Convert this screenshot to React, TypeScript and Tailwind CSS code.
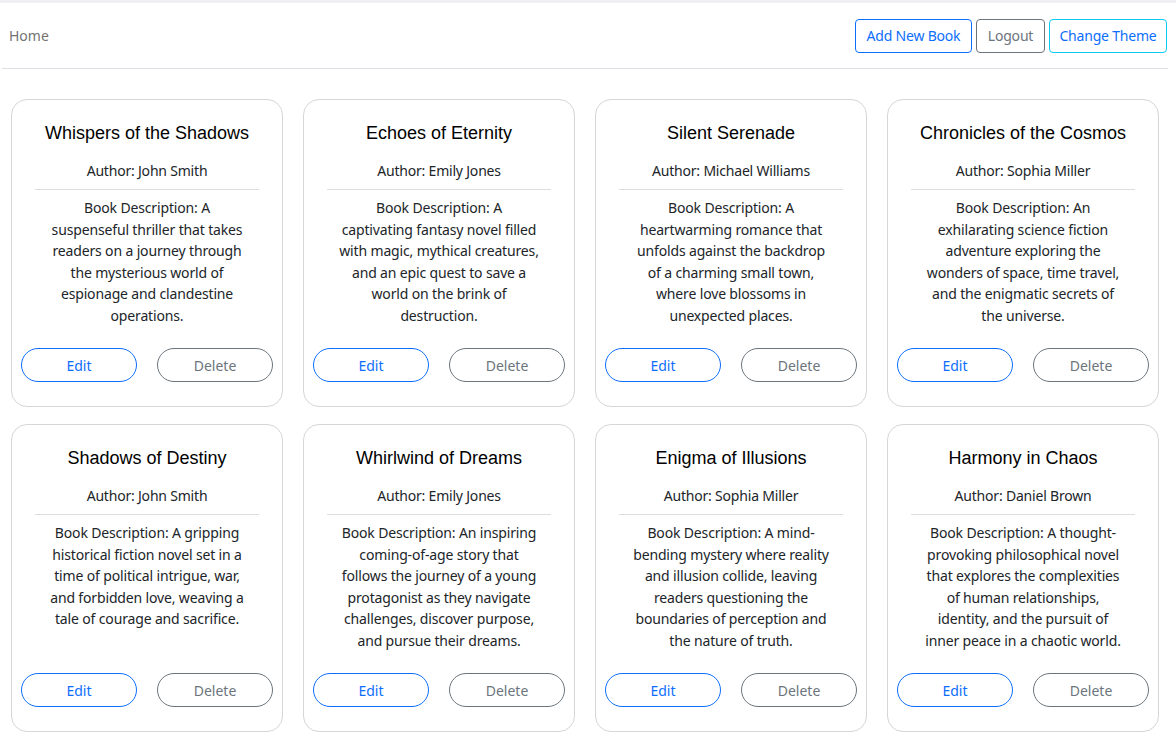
import React from "react";

type Book = { title: string; author: string; lines: string[] };

const books: Book[] = [
  {
    title: "Whispers of the Shadows",
    author: "John Smith",
    lines: [
      "Book Description: A",
      "suspenseful thriller that takes",
      "readers on a journey through",
      "the mysterious world of",
      "espionage and clandestine",
      "operations.",
    ],
  },
  {
    title: "Echoes of Eternity",
    author: "Emily Jones",
    lines: [
      "Book Description: A",
      "captivating fantasy novel filled",
      "with magic, mythical creatures,",
      "and an epic quest to save a",
      "world on the brink of",
      "destruction.",
    ],
  },
  {
    title: "Silent Serenade",
    author: "Michael Williams",
    lines: [
      "Book Description: A",
      "heartwarming romance that",
      "unfolds against the backdrop",
      "of a charming small town,",
      "where love blossoms in",
      "unexpected places.",
    ],
  },
  {
    title: "Chronicles of the Cosmos",
    author: "Sophia Miller",
    lines: [
      "Book Description: An",
      "exhilarating science fiction",
      "adventure exploring the",
      "wonders of space, time travel,",
      "and the enigmatic secrets of",
      "the universe.",
    ],
  },
  {
    title: "Shadows of Destiny",
    author: "John Smith",
    lines: [
      "Book Description: A gripping",
      "historical fiction novel set in a",
      "time of political intrigue, war,",
      "and forbidden love, weaving a",
      "tale of courage and sacrifice.",
    ],
  },
  {
    title: "Whirlwind of Dreams",
    author: "Emily Jones",
    lines: [
      "Book Description: An inspiring",
      "coming-of-age story that",
      "follows the journey of a young",
      "protagonist as they navigate",
      "challenges, discover purpose,",
      "and pursue their dreams.",
    ],
  },
  {
    title: "Enigma of Illusions",
    author: "Sophia Miller",
    lines: [
      "Book Description: A mind-",
      "bending mystery where reality",
      "and illusion collide, leaving",
      "readers questioning the",
      "boundaries of perception and",
      "the nature of truth.",
    ],
  },
  {
    title: "Harmony in Chaos",
    author: "Daniel Brown",
    lines: [
      "Book Description: A thought-",
      "provoking philosophical novel",
      "that explores the complexities",
      "of human relationships,",
      "identity, and the pursuit of",
      "inner peace in a chaotic world.",
    ],
  },
];

function Card({ b }: { b: Book }) {
  return (
    <div className="flex flex-col rounded-[16px] border border-[#d6d6d6] bg-white pt-[22px] pb-[24px] text-center">
      <h2 className="font-['Liberation_Sans',Arial,sans-serif] text-[18px] leading-[22px] text-black">
        {b.title}
      </h2>
      <p className="mt-[16px] text-[14px] leading-[21px] tracking-[-0.2px] text-[#212529]">
        Author: {b.author}
      </p>
      <div className="mx-[23px] mt-[8px] h-px bg-[#dddddd]" />
      <div className="mt-[7px] flex h-[131px] flex-col text-[14px] leading-[21.6px] tracking-[-0.15px] text-[#212529]">
        {b.lines.map((l) => (
          <span key={l} className="block whitespace-nowrap">
            {l}
          </span>
        ))}
      </div>
      <div className="mt-[20px] flex justify-between px-[9px]">
        <button className="flex h-[34px] w-[116px] items-center justify-center rounded-full border border-[#0d6efd] text-[14px] text-[#0d6efd]">
          Edit
        </button>
        <button className="flex h-[34px] w-[116px] items-center justify-center rounded-full border border-[#6c757d] text-[14px] text-[#6c757d]">
          Delete
        </button>
      </div>
    </div>
  );
}

export default function App() {
  return (
    <div className="min-h-screen bg-white font-['Noto_Sans',sans-serif]">
      <div className="h-[3px] bg-[#f0f0f3]" />
      <nav className="ml-[2px] mr-[8px] flex h-[66px] items-center justify-between border-b border-[#dee2e6] pl-[7px] pr-[1px]">
        <span className="text-[14px] text-[#737373]">Home</span>
        <div className="flex items-center gap-[4px]">
          <button className="flex h-[34px] w-[117px] items-center justify-center rounded-[4px] border border-[#0d6efd] text-[14px] tracking-[-0.2px] text-[#0d6efd]">
            Add New Book
          </button>
          <button className="flex h-[34px] w-[69px] items-center justify-center rounded-[4px] border border-[#6c757d] text-[14px] tracking-[-0.2px] text-[#6c757d]">
            Logout
          </button>
          <button className="flex h-[34px] w-[118px] items-center justify-center rounded-[4px] border border-[#0dcaf0] text-[14px] tracking-[-0.2px] text-[#0d6efd]">
            Change Theme
          </button>
        </div>
      </nav>
      <main className="grid grid-cols-4 gap-x-[20px] gap-y-[17px] pl-[11px] pr-[17px] pt-[30px]">
        {books.map((b) => (
          <Card key={b.title} b={b} />
        ))}
      </main>
    </div>
  );
}
